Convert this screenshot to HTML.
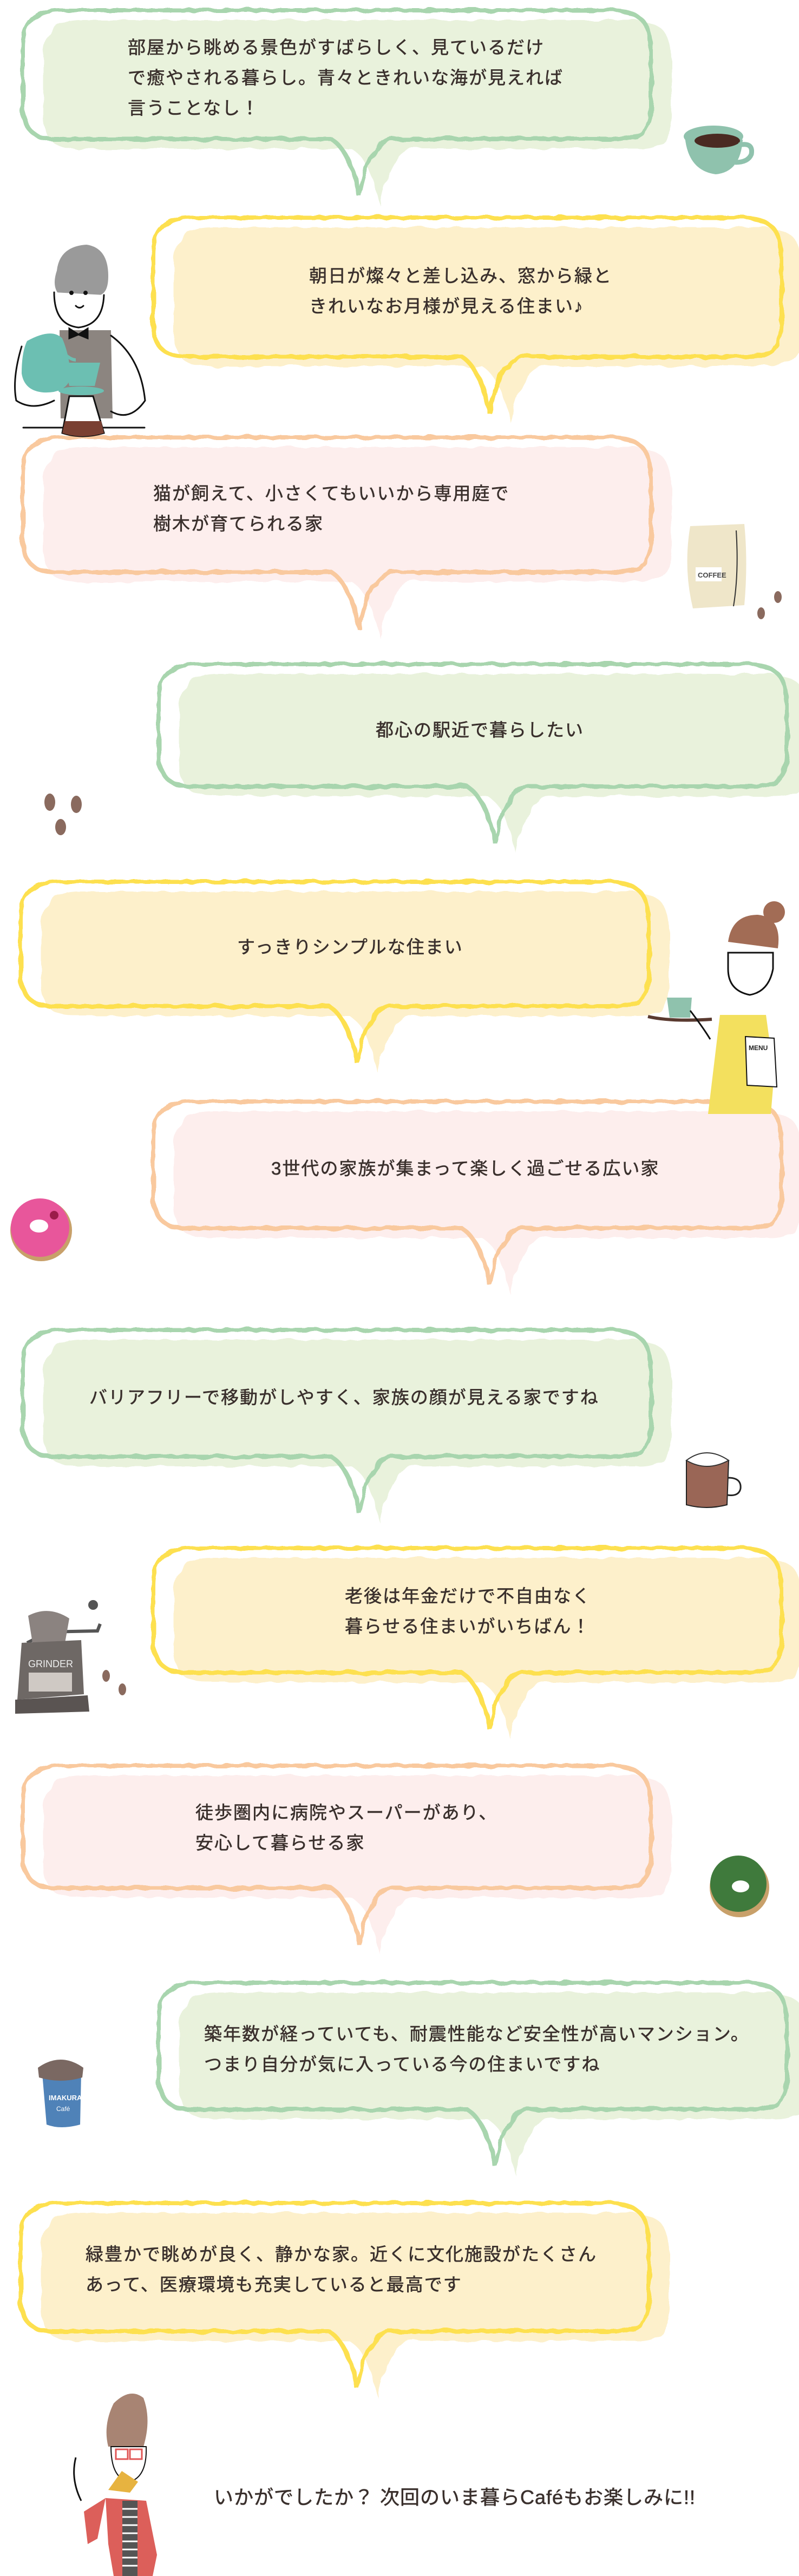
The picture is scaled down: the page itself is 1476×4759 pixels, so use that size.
<!DOCTYPE html>
<html><head><meta charset="utf-8"><style>
html,body{margin:0;padding:0;background:#fff}
body{width:1476px;height:4759px;position:relative;overflow:hidden}
svg.bg{position:absolute;left:0;top:0}
.t{position:absolute;font-family:"Liberation Sans","Noto Sans CJK JP",sans-serif;font-size:33px;letter-spacing:2px;line-height:56px;color:#3a302d;white-space:nowrap;-webkit-text-stroke:0.6px #3a302d}
</style></head><body>
<svg class="bg" width="1476" height="4759" viewBox="0 0 1476 4759" xmlns="http://www.w3.org/2000/svg">
<defs>
<filter id="r" x="-5%" y="-5%" width="110%" height="120%"><feTurbulence type="fractalNoise" baseFrequency="0.04" numOctaves="2" seed="3"/><feDisplacementMap in="SourceGraphic" scale="9"/></filter>
<filter id="r2" x="-5%" y="-5%" width="110%" height="120%"><feTurbulence type="fractalNoise" baseFrequency="0.03" numOctaves="2" seed="7"/><feDisplacementMap in="SourceGraphic" scale="12"/></filter>
</defs>
<g id="bubbles">
<g transform="translate(80,37)"><path filter="url(#r2)" fill="#e9f2dc" d="M70,0 H1091 Q1161,0 1161,70 V178 Q1161,238 1101,238 H680 Q640,248 622,343 Q604,258 570,238 H60 Q0,238 0,178 V70 Q0,0 70,0 Z"/></g>
<g transform="translate(42,19)"><path filter="url(#r)" fill="none" stroke="#a8d5ae" stroke-width="8" d="M70,0 H1091 Q1161,0 1161,70 V178 Q1161,238 1101,238 H680 Q640,248 622,343 Q604,258 570,238 H60 Q0,238 0,178 V70 Q0,0 70,0 Z"/></g>
<g transform="translate(321,420)"><path filter="url(#r2)" fill="#fdf0cb" d="M70,0 H1091 Q1161,0 1161,70 V197 Q1161,257 1101,257 H680 Q640,267 622,362 Q604,277 570,257 H60 Q0,257 0,197 V70 Q0,0 70,0 Z"/></g>
<g transform="translate(283,402)"><path filter="url(#r)" fill="none" stroke="#fde050" stroke-width="8" d="M70,0 H1091 Q1161,0 1161,70 V197 Q1161,257 1101,257 H680 Q640,267 622,362 Q604,277 570,257 H60 Q0,257 0,197 V70 Q0,0 70,0 Z"/></g>
<g transform="translate(80,826)"><path filter="url(#r2)" fill="#fdeeed" d="M70,0 H1091 Q1161,0 1161,70 V189 Q1161,249 1101,249 H680 Q640,259 622,354 Q604,269 570,249 H60 Q0,249 0,189 V70 Q0,0 70,0 Z"/></g>
<g transform="translate(42,808)"><path filter="url(#r)" fill="none" stroke="#f9c99e" stroke-width="8" d="M70,0 H1091 Q1161,0 1161,70 V189 Q1161,249 1101,249 H680 Q640,259 622,354 Q604,269 570,249 H60 Q0,249 0,189 V70 Q0,0 70,0 Z"/></g>
<g transform="translate(331,1245)"><path filter="url(#r2)" fill="#e9f2dc" d="M70,0 H1091 Q1161,0 1161,70 V166 Q1161,226 1101,226 H680 Q640,236 622,331 Q604,246 570,226 H60 Q0,226 0,166 V70 Q0,0 70,0 Z"/></g>
<g transform="translate(293,1227)"><path filter="url(#r)" fill="none" stroke="#a8d5ae" stroke-width="8" d="M70,0 H1091 Q1161,0 1161,70 V166 Q1161,226 1101,226 H680 Q640,236 622,331 Q604,246 570,226 H60 Q0,226 0,166 V70 Q0,0 70,0 Z"/></g>
<g transform="translate(76,1647)"><path filter="url(#r2)" fill="#fdf0cb" d="M70,0 H1091 Q1161,0 1161,70 V170 Q1161,230 1101,230 H680 Q640,240 622,335 Q604,250 570,230 H60 Q0,230 0,170 V70 Q0,0 70,0 Z"/></g>
<g transform="translate(38,1629)"><path filter="url(#r)" fill="none" stroke="#fde050" stroke-width="8" d="M70,0 H1091 Q1161,0 1161,70 V170 Q1161,230 1101,230 H680 Q640,240 622,335 Q604,250 570,230 H60 Q0,230 0,170 V70 Q0,0 70,0 Z"/></g>
<g transform="translate(321,2053)"><path filter="url(#r2)" fill="#fdeeed" d="M70,0 H1091 Q1161,0 1161,70 V174 Q1161,234 1101,234 H680 Q640,244 622,339 Q604,254 570,234 H60 Q0,234 0,174 V70 Q0,0 70,0 Z"/></g>
<g transform="translate(283,2035)"><path filter="url(#r)" fill="none" stroke="#f9c99e" stroke-width="8" d="M70,0 H1091 Q1161,0 1161,70 V174 Q1161,234 1101,234 H680 Q640,244 622,339 Q604,254 570,234 H60 Q0,234 0,174 V70 Q0,0 70,0 Z"/></g>
<g transform="translate(80,2475)"><path filter="url(#r2)" fill="#e9f2dc" d="M70,0 H1091 Q1161,0 1161,70 V174 Q1161,234 1101,234 H680 Q640,244 622,339 Q604,254 570,234 H60 Q0,234 0,174 V70 Q0,0 70,0 Z"/></g>
<g transform="translate(42,2457)"><path filter="url(#r)" fill="none" stroke="#a8d5ae" stroke-width="8" d="M70,0 H1091 Q1161,0 1161,70 V174 Q1161,234 1101,234 H680 Q640,244 622,339 Q604,254 570,234 H60 Q0,234 0,174 V70 Q0,0 70,0 Z"/></g>
<g transform="translate(321,2878)"><path filter="url(#r2)" fill="#fdf0cb" d="M70,0 H1091 Q1161,0 1161,70 V170 Q1161,230 1101,230 H680 Q640,240 622,335 Q604,250 570,230 H60 Q0,230 0,170 V70 Q0,0 70,0 Z"/></g>
<g transform="translate(283,2860)"><path filter="url(#r)" fill="none" stroke="#fde050" stroke-width="8" d="M70,0 H1091 Q1161,0 1161,70 V170 Q1161,230 1101,230 H680 Q640,240 622,335 Q604,250 570,230 H60 Q0,230 0,170 V70 Q0,0 70,0 Z"/></g>
<g transform="translate(80,3280)"><path filter="url(#r2)" fill="#fdeeed" d="M70,0 H1091 Q1161,0 1161,70 V166 Q1161,226 1101,226 H680 Q640,236 622,331 Q604,246 570,226 H60 Q0,226 0,166 V70 Q0,0 70,0 Z"/></g>
<g transform="translate(42,3262)"><path filter="url(#r)" fill="none" stroke="#f9c99e" stroke-width="8" d="M70,0 H1091 Q1161,0 1161,70 V166 Q1161,226 1101,226 H680 Q640,236 622,331 Q604,246 570,226 H60 Q0,226 0,166 V70 Q0,0 70,0 Z"/></g>
<g transform="translate(331,3681)"><path filter="url(#r2)" fill="#e9f2dc" d="M70,0 H1091 Q1161,0 1161,70 V174 Q1161,234 1101,234 H680 Q640,244 622,339 Q604,254 570,234 H60 Q0,234 0,174 V70 Q0,0 70,0 Z"/></g>
<g transform="translate(293,3663)"><path filter="url(#r)" fill="none" stroke="#a8d5ae" stroke-width="8" d="M70,0 H1091 Q1161,0 1161,70 V174 Q1161,234 1101,234 H680 Q640,244 622,339 Q604,254 570,234 H60 Q0,234 0,174 V70 Q0,0 70,0 Z"/></g>
<g transform="translate(76,4088)"><path filter="url(#r2)" fill="#fdf0cb" d="M70,0 H1091 Q1161,0 1161,70 V177 Q1161,237 1101,237 H680 Q640,247 622,342 Q604,257 570,237 H60 Q0,237 0,177 V70 Q0,0 70,0 Z"/></g>
<g transform="translate(38,4070)"><path filter="url(#r)" fill="none" stroke="#fde050" stroke-width="8" d="M70,0 H1091 Q1161,0 1161,70 V177 Q1161,237 1101,237 H680 Q640,247 622,342 Q604,257 570,237 H60 Q0,237 0,177 V70 Q0,0 70,0 Z"/></g>
</g>

<g>
<path d="M1265,250 Q1270,315 1322,322 Q1368,318 1372,258 Z" fill="#8fc2ad"/>
<ellipse cx="1318" cy="252" rx="55" ry="20" fill="#8fc2ad"/>
<ellipse cx="1325" cy="260" rx="42" ry="13" fill="#4a2a22"/>
<path d="M1365,268 Q1392,262 1388,285 Q1382,300 1358,300" fill="none" stroke="#8fc2ad" stroke-width="9"/>
</g>

<g stroke="#111" stroke-width="3" stroke-linecap="round" fill="none">
<path d="M105,500 Q110,455 160,452 Q200,458 200,510 Q200,540 185,545 L110,545 Q95,530 105,500 Z" fill="#9a9a9a" stroke="none"/>
<path d="M100,540 Q100,600 145,605 Q190,600 192,545" fill="#fff"/>
<circle cx="132" cy="541" r="2.5" fill="#111"/><circle cx="158" cy="541" r="2.5" fill="#111"/>
<path d="M140,565 Q147,572 154,565"/>
<path d="M110,610 L205,610 L208,773 L112,773 Z" fill="#8c8580" stroke="none"/>
<path d="M128,607 L145,618 L162,607 L162,625 L145,618 L128,625 Z" fill="#111"/>
<path d="M205,620 Q260,660 268,740 Q240,780 205,760"/>
<path d="M40,640 Q22,700 30,740 Q60,760 100,740"/>
<path d="M43,790 L267,790"/>
</g>
<g>
<path d="M50,630 Q95,605 115,625 Q130,660 130,700 Q120,727 80,725 Q45,722 40,690 Q40,650 50,630 Z" fill="#6cbfb2"/>
<path d="M115,650 Q130,665 140,665" stroke="#6cbfb2" stroke-width="6" fill="none"/>
<path d="M118,670 L185,670 L175,713 L128,713 Z" fill="#6cbfb2"/>
<ellipse cx="150" cy="722" rx="42" ry="8" fill="#6cbfb2"/>
<path d="M128,732 L172,732 L192,800 Q152,812 115,800 Z" fill="#fff" stroke="#111" stroke-width="3"/>
<path d="M120,778 L187,778 L192,800 Q152,812 115,800 Z" fill="#7a4032"/>
</g>

<g>
<path d="M1275,972 L1375,968 Q1382,1040 1375,1118 L1280,1124 Q1262,1050 1275,972 Z" fill="#efe6c9"/>
<path d="M1360,980 Q1365,1060 1355,1120" stroke="#333" stroke-width="2" fill="none"/>
<rect x="1285" y="1048" width="48" height="26" fill="#fff"/>
<text x="1289" y="1067" font-family="Liberation Sans" font-size="13" font-weight="bold" fill="#444">COFFEE</text>
<ellipse cx="1437" cy="1103" rx="7" ry="11" fill="#8a6a5e"/>
<ellipse cx="1406" cy="1133" rx="7" ry="11" fill="#8a6a5e"/>
</g>

<g fill="#8a6a5e">
<ellipse cx="92" cy="1482" rx="10" ry="16"/><ellipse cx="141" cy="1486" rx="10" ry="16"/><ellipse cx="112" cy="1528" rx="10" ry="15"/>
</g>

<g>
<path d="M1345,1740 Q1352,1690 1400,1690 Q1445,1695 1437,1752 Z" fill="#a26c55"/>
<circle cx="1430" cy="1685" r="20" fill="#a26c55"/>
<path d="M1345,1790 Q1345,1830 1385,1838 Q1420,1832 1428,1790 L1428,1760 L1345,1760 Z" fill="#fff" stroke="#111" stroke-width="3"/>
<path d="M1330,1875 L1415,1875 L1430,1985 L1424,2058 L1308,2058 Z" fill="#f3e05e"/>
<path d="M1377,1915 L1430,1918 L1435,2008 L1380,2005 Z" fill="#fff" stroke="#111" stroke-width="2"/>
<text x="1383" y="1940" font-family="Liberation Sans" font-size="12" font-weight="bold" fill="#222">MENU</text>
<path d="M1197,1878 Q1240,1888 1315,1883" stroke="#5a3a30" stroke-width="6" fill="none"/>
<path d="M1232,1843 L1278,1843 L1275,1880 L1237,1880 Z" fill="#8fc2ad"/>
<path d="M1275,1867 Q1300,1900 1312,1920" stroke="#111" stroke-width="3" fill="none"/>
</g>

<g><circle cx="76" cy="2273" r="57" fill="#c8a06a"/><circle cx="74" cy="2268" r="54" fill="#e8569b"/><ellipse cx="72" cy="2265" rx="17" ry="12" fill="#fff"/><circle cx="100" cy="2245" r="8" fill="#9b1c4a"/></g>

<g><path d="M1268,2698 L1346,2698 L1343,2780 Q1305,2790 1268,2780 Z" fill="#9a6656" stroke="#222" stroke-width="2"/><path d="M1268,2698 Q1305,2670 1346,2698 Q1305,2720 1268,2698 Z" fill="#fff" stroke="#333" stroke-width="2"/><path d="M1345,2730 Q1370,2730 1368,2750 Q1365,2765 1344,2762" fill="none" stroke="#222" stroke-width="3"/></g>

<g><path d="M50,3035 L90,3015 L180,3013 L185,3000" fill="none" stroke="#555" stroke-width="6"/><circle cx="172" cy="2965" r="9" fill="#555"/>
<path d="M52,2985 Q90,2965 128,2990 L120,3035 Q86,3045 60,3035 Z" fill="#8b8380"/>
<path d="M40,3035 L150,3030 L155,3130 L32,3140 Z" fill="#6e6865"/>
<path d="M28,3140 L162,3132 L165,3162 L28,3166 Z" fill="#5a5452"/>
<rect x="53" y="3090" width="80" height="35" fill="#cfc9c4"/>
<text x="52" y="3080" font-family="Liberation Sans" font-size="18" fill="#eee">GRINDER</text>
<ellipse cx="196" cy="3096" rx="7" ry="11" fill="#8a6a5e"/><ellipse cx="226" cy="3121" rx="7" ry="11" fill="#8a6a5e"/></g>

<g><circle cx="1366" cy="3487" r="55" fill="#c8a06a"/><circle cx="1364" cy="3480" r="52" fill="#3f7a3c"/><ellipse cx="1368" cy="3485" rx="16" ry="11" fill="#fff"/></g>

<g><path d="M78,3830 L150,3830 L148,3925 Q112,3935 86,3925 Z" fill="#4f82b8"/><path d="M70,3820 Q112,3790 154,3820 L152,3838 Q112,3850 72,3838 Z" fill="#7a6862"/>
<text x="90" y="3880" font-family="Liberation Sans" font-size="13" font-weight="bold" fill="#fff">IMAKURA</text><text x="104" y="3900" font-family="Liberation Sans" font-size="12" fill="#fff">Café</text></g>

<g>
<path d="M210,4440 Q240,4410 265,4430 Q280,4470 265,4520 L200,4520 Q190,4480 210,4440 Z" fill="#a88473"/>
<path d="M205,4520 Q205,4580 240,4585 Q272,4575 270,4520 Z" fill="#fff" stroke="#111" stroke-width="2"/>
<rect x="214" y="4525" width="22" height="18" fill="none" stroke="#e05656" stroke-width="3"/><rect x="240" y="4525" width="22" height="18" fill="none" stroke="#e05656" stroke-width="3"/>
<path d="M195,4615 L270,4620 L290,4720 L282,4759 L210,4759 L200,4700 Z" fill="#dc5f5a"/>
<rect x="226" y="4620" width="28" height="139" fill="#555"/>
<g stroke="#fff" stroke-width="3"><path d="M226,4635H254M226,4650H254M226,4665H254M226,4680H254M226,4695H254M226,4710H254M226,4725H254M226,4740H254"/></g>
<path d="M195,4615 L155,4640 L162,4700 L180,4690 Z" fill="#dc5f5a"/>
<path d="M140,4540 Q130,4580 150,4620" stroke="#111" stroke-width="3" fill="none"/>
<path d="M200,4600 L240,4605 L255,4585 L225,4565 Z" fill="#e7b340"/>
</g>
</svg>

<div class="t" style="left:236px;top:60px">部屋から眺める景色がすばらしく、見ているだけ<br>で癒やされる暮らし。青々ときれいな海が見えれば<br>言うことなし！</div>
<div class="t" style="left:571px;top:482px">朝日が燦々と差し込み、窓から緑と<br>きれいなお月様が見える住まい♪</div>
<div class="t" style="left:283px;top:884px">猫が飼えて、小さくてもいいから専用庭で<br>樹木が育てられる家</div>
<div class="t" style="left:694px;top:1321px">都心の駅近で暮らしたい</div>
<div class="t" style="left:438px;top:1722px">すっきりシンプルな住まい</div>
<div class="t" style="left:501px;top:2131px">3世代の家族が集まって楽しく過ごせる広い家</div>
<div class="t" style="left:165px;top:2554px">バリアフリーで移動がしやすく、家族の顔が見える家ですね</div>
<div class="t" style="left:637px;top:2921px">老後は年金だけで不自由なく<br>暮らせる住まいがいちばん！</div>
<div class="t" style="left:361px;top:3321px">徒歩圏内に病院やスーパーがあり、<br>安心して暮らせる家</div>
<div class="t" style="left:377px;top:3730px">築年数が経っていても、耐震性能など安全性が高いマンション。<br>つまり自分が気に入っている今の住まいですね</div>
<div class="t" style="left:158px;top:4137px">緑豊かで眺めが良く、静かな家。近くに文化施設がたくさん<br>あって、医療環境も充実していると最高です</div>
<div class="t" style="left:395px;top:4586px;font-size:36px;letter-spacing:1px">いかがでしたか？ 次回のいま暮らCaféもお楽しみに!!</div>
</body></html>
